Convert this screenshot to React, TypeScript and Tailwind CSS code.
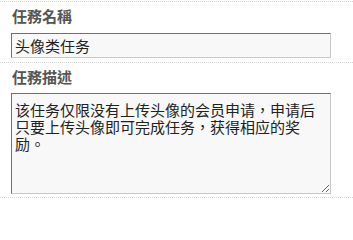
export default function App() {
  const font = { fontFamily: '"Noto Sans CJK TC", "Noto Sans CJK SC", "Noto Sans", sans-serif' };
  return (
    <div className="w-[353px] h-[201px] bg-white text-[#222]" style={font}>
      <div className="mt-[1px] border-t border-dotted border-[#d6d6d6] pt-[4px] pb-[4px]">
        <div className="pl-[12px] h-[20px] leading-[20px] text-[15px] font-bold text-[#555] mb-[7px]">任務名稱</div>
        <div className="ml-[11px] w-[320px]">
          <input
            type="text"
            defaultValue="头像类任务"
            className="block w-full h-[25px] px-[3px] text-[15px] leading-[23px] bg-[#f8f8f8] border border-t-[#707070] border-l-[#707070] border-r-[#c8c8c8] border-b-[#c8c8c8] outline-none"
          />
        </div>
      </div>
      <div className="border-t border-dotted border-[#d6d6d6] pt-[4px] pb-[3px]">
        <div className="pl-[12px] h-[20px] leading-[20px] text-[15px] font-bold text-[#555] mb-[6px]">任務描述</div>
        <div className="ml-[11px] w-[320px]">
          <textarea
            defaultValue="该任务仅限没有上传头像的会员申请，申请后只要上传头像即可完成任务，获得相应的奖励。"
            className="block w-full h-[101px] px-[3px] pt-[7px] text-[15px] leading-[17px] bg-[#f8f8f8] border border-t-[#707070] border-l-[#707070] border-r-[#c8c8c8] border-b-[#c8c8c8] outline-none resize"
          />
        </div>
      </div>
      <div className="border-t border-dotted border-[#d6d6d6]" />
    </div>
  );
}
